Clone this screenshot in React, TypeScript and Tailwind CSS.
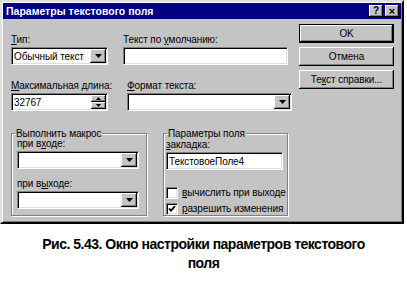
import React from "react";

const sunken =
  "bg-white border-t border-l border-[#808080] border-b border-r border-b-white border-r-white shadow-[inset_1px_1px_0_#000,inset_-1px_-1px_0_#dfdfdf]";
const raised =
  "bg-[#c4c4c4] shadow-[inset_-1px_-1px_0_#000,inset_1px_1px_0_#fff,inset_-2px_-2px_0_#808080]";

const U = ({ children }: { children: React.ReactNode }) => <span className="underline">{children}</span>;

const Arrow = () => (
  <svg width="7" height="4" viewBox="0 0 7 4">
    <path d="M0 0h7L3.5 4z" fill="#000" />
  </svg>
);

const Combo = ({ w, value }: { w: string; value?: string }) => (
  <div className={`${w} h-[18px] ${sunken} flex items-center`}>
    <span className="flex-1 pl-[2px] overflow-hidden">{value}</span>
    <div className={`w-[16px] h-[14px] mr-[1px] shrink-0 ${raised} flex items-center justify-center`}>
      <Arrow />
    </div>
  </div>
);

const Btn = ({ children, def }: { children: React.ReactNode; def?: boolean }) => (
  <div className={`w-[95px] h-[19px] ${def ? "border border-black" : ""}`}>
    <div className={`w-full h-full ${raised} flex items-center justify-center`}>{children}</div>
  </div>
);

const Check = ({ on, children }: { on?: boolean; children: React.ReactNode }) => (
  <div className="flex items-center gap-[4px] h-[13px]">
    <div className={`w-[12px] h-[12px] shrink-0 ${sunken} flex items-center justify-center`}>
      {on && (
        <svg width="8" height="8" viewBox="0 0 8 8">
          <path d="M1 3.5l2 2.2L7 1.2" stroke="#000" strokeWidth="1.8" fill="none" />
        </svg>
      )}
    </div>
    <span>{children}</span>
  </div>
);

export default function App() {
  return (
    <div className="w-[407px] h-[281px] bg-white font-['Liberation_Sans',Arial,sans-serif] text-[10px] tracking-[-0.1px] text-black leading-[13px] whitespace-nowrap">
      {/* dialog */}
      <div className="w-[404px] h-[224px] bg-[#c4c4c4] border-2 border-t-[#dfdfdf] border-l-[#dfdfdf] border-b-black border-r-black shadow-[inset_1px_1px_0_#fff,inset_-1px_-1px_0_#808080] p-[1px] flex flex-col">
        {/* title bar */}
        <div className="h-[16px] bg-[#000080] flex items-center justify-between pl-[3px] pr-[2px]">
          <span className="text-white font-bold text-[10.5px] tracking-normal">Параметры текстового поля</span>
          <div className="flex gap-[2px]">
            <div className={`w-[14px] h-[12px] ${raised} flex items-center justify-center font-bold text-[10px] leading-none`}>?</div>
            <div className={`w-[14px] h-[12px] ${raised} flex items-center justify-center font-bold text-[11px] leading-none`}>×</div>
          </div>
        </div>

        {/* body */}
        <div className="flex">
          <div className="w-[296px] pl-[8px]">
            <div className="flex gap-[15px] pt-[14px]">
              <div className="flex flex-col gap-[1px]">
                <span><U>Т</U>ип:</span>
                <Combo w="w-[97px]" value="Обычный текст" />
              </div>
              <div className="flex flex-col gap-[1px]">
                <span>Текст по <U>у</U>молчанию:</span>
                <div className={`w-[165px] h-[18px] ${sunken}`} />
              </div>
            </div>
            <div className="flex gap-[15px] mt-[14px]">
              <div className="flex flex-col gap-[1px]">
                <span><U>М</U>аксимальная длина:</span>
                <div className={`w-[97px] h-[18px] ${sunken} flex items-center`}>
                  <span className="flex-1 pl-[2px]">32767</span>
                  <div className="flex flex-col mr-[1px]">
                    <div className={`w-[15px] h-[7px] ${raised} flex items-center justify-center`}>
                      <svg width="5" height="3" viewBox="0 0 5 3"><path d="M0 3h5L2.5 0z" /></svg>
                    </div>
                    <div className={`w-[15px] h-[7px] ${raised} flex items-center justify-center`}>
                      <svg width="5" height="3" viewBox="0 0 5 3"><path d="M0 0h5L2.5 3z" /></svg>
                    </div>
                  </div>
                </div>
              </div>
              <div className="flex flex-col gap-[1px]">
                <span><U>Ф</U>ормат текста:</span>
                <Combo w="w-[165px]" />
              </div>
            </div>

            {/* groups */}
            <div className="flex gap-[16px] mt-[22px]">
              <div className="relative w-[136px] h-[83px] border border-[#808080] shadow-[1px_1px_0_#fff,inset_1px_1px_0_#fff] px-[5px] pt-[3px]">
                <span className="absolute -top-[7px] left-[3px] bg-[#c4c4c4] px-[1px]">Выполнить макрос</span>
                <div className="flex flex-col gap-[1px]">
                  <span>при в<U>х</U>оде:</span>
                  <Combo w="w-[122px]" />
                </div>
                <div className="flex flex-col gap-[1px] mt-[8px]">
                  <span>при в<U>ы</U>ходе:</span>
                  <Combo w="w-[122px]" />
                </div>
              </div>
              <div className="relative w-[125px] h-[83px] border border-[#808080] shadow-[1px_1px_0_#fff,inset_1px_1px_0_#fff] px-[2px] pt-[4px]">
                <span className="absolute -top-[7px] left-[3px] bg-[#c4c4c4] px-[1px]">Параметры поля</span>
                <div className="flex flex-col gap-[1px]">
                  <span><U>з</U>акладка:</span>
                  <div className={`w-[117px] h-[18px] ${sunken} flex items-center pl-[2px]`}>ТекстовоеПоле4</div>
                </div>
                <div className="flex flex-col gap-[3px] mt-[16px]">
                  <Check><U>в</U>ычислить при выходе</Check>
                  <Check on><U>р</U>азрешить изменения</Check>
                </div>
              </div>
            </div>
          </div>

          {/* buttons */}
          <div className="flex flex-col gap-[4px] pt-[5px]">
            <Btn def>OK</Btn>
            <Btn>Отмена</Btn>
            <Btn>Те<U>к</U>ст справки...</Btn>
          </div>
        </div>
      </div>

      {/* caption */}
      <div className="pt-[11px] text-center font-bold text-[14px] leading-[19px] tracking-[-0.5px]">
        <div>Рис. 5.43. Окно настройки параметров текстового</div>
        <div>поля</div>
      </div>
    </div>
  );
}
